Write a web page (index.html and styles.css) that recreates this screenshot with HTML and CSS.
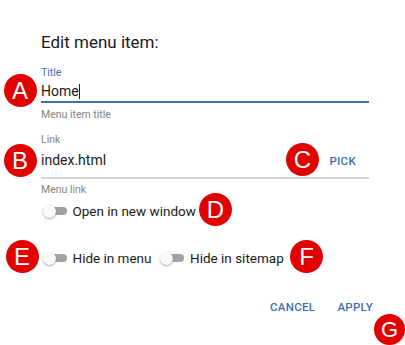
FILE: index.html
```html
<!DOCTYPE html>
<html>
<head>
<link rel="stylesheet" href="styles.css">
</head>
<body>
  <div class="dialog">
    <h2 class="dialog-title">Edit menu item:</h2>

    <div class="field field-focused">
      <label class="field-label">Title</label>
      <div class="field-row">
        <div class="field-input">Home<span class="caret"></span></div>
      </div>
      <div class="field-help">Menu item title</div>
    </div>

    <div class="field field-link">
      <label class="field-label">Link</label>
      <div class="field-row">
        <div class="field-input">index.html</div>
        <button class="text-btn pick-btn">Pick</button>
      </div>
      <div class="field-help">Menu link</div>
    </div>

    <div class="switch-row first-switch">
      <span class="switch"><span class="switch-track"></span><span class="switch-thumb"></span></span>
      <span class="switch-label">Open in new window</span>
    </div>

    <div class="switch-row second-switch">
      <span class="switch"><span class="switch-track"></span><span class="switch-thumb"></span></span>
      <span class="switch-label">Hide in menu</span>
      <span class="switch"><span class="switch-track"></span><span class="switch-thumb"></span></span>
      <span class="switch-label">Hide in sitemap</span>
    </div>

    <div class="dialog-actions">
      <button class="text-btn">Cancel</button>
      <button class="text-btn">Apply</button>
    </div>

    <!-- callout markers -->
    <span class="badge badge-a">A</span>
    <span class="badge badge-b">B</span>
    <span class="badge badge-c">C</span>
    <span class="badge badge-d">D</span>
    <span class="badge badge-e">E</span>
    <span class="badge badge-f">F</span>
    <span class="badge badge-g">G</span>
  </div>
</body>
</html>
```

FILE: styles.css
```css
* {
  box-sizing: border-box;
  margin: 0;
  padding: 0;
}
body {
  background: #fff;
  font-family: Roboto, "Liberation Sans", sans-serif;
  color: #1a1a1a;
  width: 405px;
  height: 345px;
  overflow: hidden;
}
.dialog {
  position: relative;
  height: 345px;
  padding: 32px 36px 0 41px;
}
.dialog-title {
  font-size: 17px;
  font-weight: 400;
  line-height: 20px;
  color: #1a1a1a;
  margin-bottom: 14px;
}

/* text fields */
.field-label {
  display: block;
  font-size: 10.5px;
  line-height: 13px;
  color: #858585;
}
.field-focused .field-label {
  color: #3f6db3;
}
.field-row {
  display: flex;
  align-items: baseline;
  margin-top: 2px;
  border-bottom: 2px solid #d6d6d6;
}
.field-focused .field-row {
  border-bottom-color: #3f6db3;
}
.field-link .field-row {
  margin-top: 4px;
  padding-bottom: 6px;
}
.field-input {
  flex: 1;
  font-size: 14px;
  line-height: 20px;
  color: #1a1a1a;
}
.caret {
  display: inline-block;
  width: 1px;
  height: 15px;
  background: #222;
  vertical-align: -3px;
}
.field-help {
  font-size: 10.5px;
  line-height: 13px;
  color: #858585;
  margin-top: 5px;
}
.field-link {
  margin-top: 12px;
}
.field-link .field-help {
  margin-top: 4px;
}

/* buttons */
.text-btn {
  background: none;
  border: none;
  font-family: Roboto, "Liberation Sans", sans-serif;
  font-weight: 500;
  font-size: 11.5px;
  letter-spacing: 0.3px;
  text-transform: uppercase;
  color: #3f6db3;
  padding: 0 8px;
  line-height: 20px;
}
.pick-btn {
  margin-right: 5px;
}

/* switches */
.switch-row {
  display: flex;
  align-items: center;
  height: 24px;
}
.first-switch {
  margin-top: 3px;
}
.second-switch {
  margin-top: 23px;
}
.switch {
  position: relative;
  width: 24px;
  height: 14px;
  margin-left: 1.5px;
  margin-right: 6px;
  flex: none;
}
.switch-track {
  position: absolute;
  left: 5px;
  right: 0;
  top: 3px;
  height: 8px;
  border-radius: 4px;
  background: #a2a2a2;
}
.switch-thumb {
  position: absolute;
  left: 0;
  top: 0.5px;
  width: 13px;
  height: 13px;
  border-radius: 50%;
  background: #fafafa;
  box-shadow: 0 1px 2px rgba(0, 0, 0, 0.35);
}
.switch-label {
  font-size: 13.5px;
  color: #1a1a1a;
  margin-right: 7px;
}

.dialog-actions {
  display: flex;
  justify-content: flex-end;
  gap: 6px;
  margin-top: 27px;
  margin-right: -12px;
}

/* callout markers */
.badge {
  position: absolute;
  width: 33px;
  height: 33px;
  border-radius: 50%;
  background: #e30000;
  color: #fff;
  font-family: "Liberation Sans", Arial, sans-serif;
  font-size: 24px;
  line-height: 33px;
  text-align: center;
}
.badge-a { left: 3.5px; top: 73.5px; }
.badge-b { left: 3.5px; top: 144px; }
.badge-c { left: 286px; top: 143px; }
.badge-d { left: 199px; top: 192.5px; }
.badge-e { left: 5.5px; top: 240px; }
.badge-f { left: 290px; top: 239.5px; }
.badge-g { left: 374px; top: 314px; width: 31px; height: 31px; line-height: 31px; font-size: 22px; }
```
